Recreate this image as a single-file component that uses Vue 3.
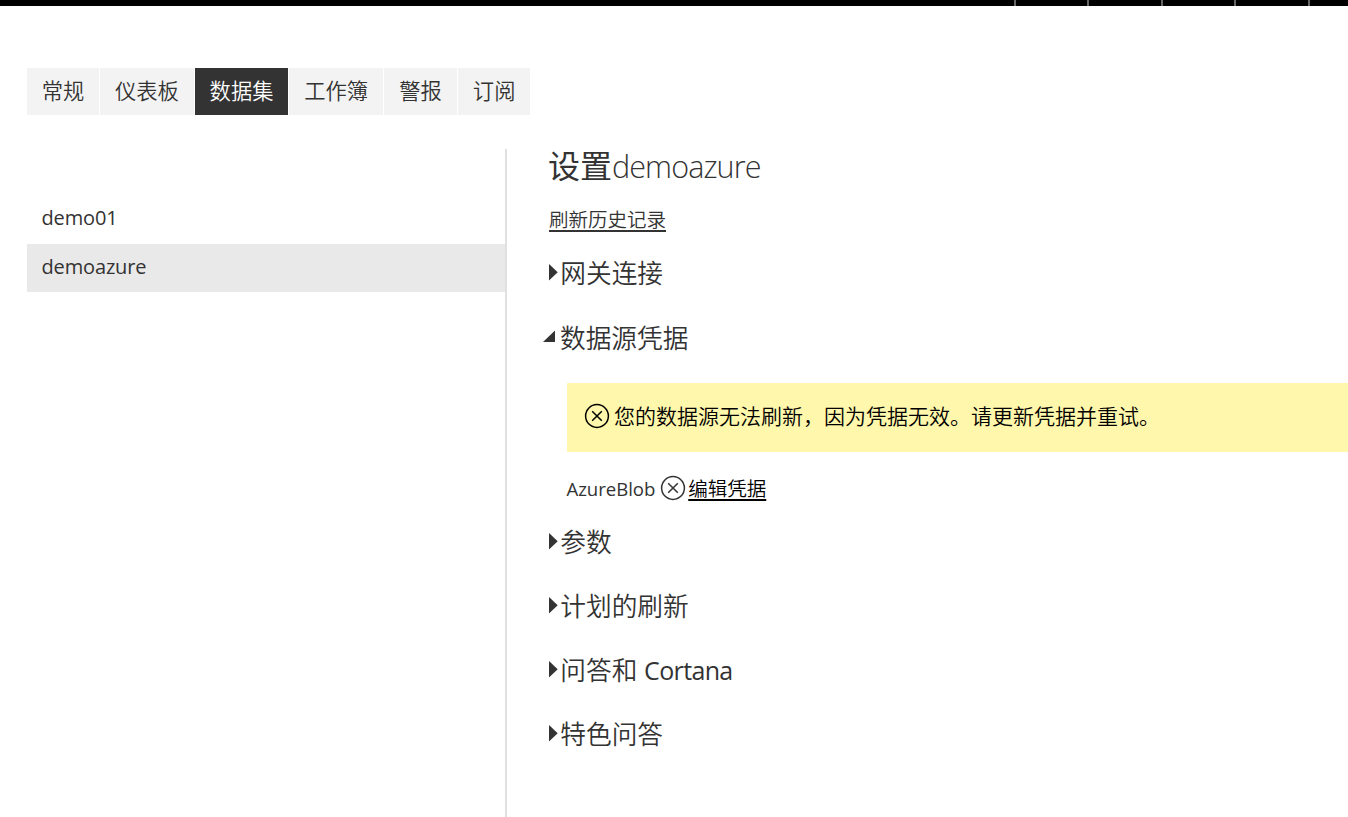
<script setup>
const tabs = [
  { label: '常规', size: 'w72' },
  { label: '仪表板', size: 'w93' },
  { label: '数据集', size: 'w93', active: true },
  { label: '工作簿', size: 'w93' },
  { label: '警报', size: 'w73' },
  { label: '订阅', size: 'w72' }
]
const lower = [
  { text: '参数' },
  { text: '计划的刷新' },
  { text: '问答和 ', latin: 'Cortana' },
  { text: '特色问答' }
]
</script>

<template>
  <div class="page">
    <header class="topbar"><i v-for="n in 5" :key="n"></i></header>
    <nav class="tabs">
      <button
        v-for="t in tabs"
        :key="t.label"
        :class="['tab', t.size, { active: t.active }]"
      >{{ t.label }}</button>
    </nav>
    <div class="body">
      <aside class="list">
        <div class="item">demo01</div>
        <div class="item selected">demoazure</div>
      </aside>
      <main class="main">
        <h1>设置<span>demoazure</span></h1>
        <a class="link history">刷新历史记录</a>
        <h2><svg class="tri" viewBox="0 0 12 18"><path d="M0 1L8.7 9.2L0 17.4Z" /></svg><span>网关连接</span></h2>
        <h2 class="expanded"><svg class="tri open" viewBox="0 0 18 18"><path d="M0 14H12V2.5Z" /></svg><span>数据源凭据</span></h2>
        <div class="alert">
          <svg class="cross" viewBox="0 0 26 26"><circle cx="13" cy="13" r="11.4" /><path d="M8.2 8.2L17.8 17.8M17.8 8.2L8.2 17.8" /></svg>
          <span>您的数据源无法刷新，因为凭据无效。请更新凭据并重试。</span>
        </div>
        <div class="cred">
          <span class="source">AzureBlob</span>
          <svg class="cross" viewBox="0 0 26 26"><circle cx="13" cy="13" r="11.4" /><path d="M8.2 8.2L17.8 17.8M17.8 8.2L8.2 17.8" /></svg>
          <a class="link edit">编辑凭据</a>
        </div>
        <h2 v-for="h in lower" :key="h.text"><svg class="tri" viewBox="0 0 12 18"><path d="M0 1L8.7 9.2L0 17.4Z" /></svg><span>{{ h.text }}</span><span v-if="h.latin" class="latin">{{ h.latin }}</span></h2>
      </main>
    </div>
  </div>
</template>

<style>
body { background: #fff; overflow: hidden; }
</style>

<style scoped>
.page {
  height: 817px;
  overflow: hidden;
  display: flex;
  flex-direction: column;
  color: #333;
  font-family: 'Noto Sans CJK SC', sans-serif;
  font-weight: 350;
}
.topbar {
  flex: none;
  height: 6px;
  background: #000;
  display: flex;
  justify-content: flex-end;
  gap: 71.5px;
  padding-right: 38.2px;
}
.topbar i { width: 2px; background: #666; }
.tabs { flex: none; display: flex; height: 47px; margin: 62px 0 0 27px; gap: 1.3px; }
.tab {
  border: 0;
  padding: 0 0 4px;
  background: #f3f3f3;
  color: #333;
  font: inherit;
  font-size: 21.3px;
  line-height: 43px;
  white-space: nowrap;
}
.w72 { width: 72px; }
.w73 { width: 72.8px; }
.w93 { width: 93.3px; }
.tab.active { background: #333; color: #fff; }
.body { display: flex; flex: 1; margin: 34px 0 0 27px; min-height: 0; }
.list { width: 478px; border-right: 2px solid #e0e0e0; padding-top: 46px; }
.item {
  height: 48px;
  margin-bottom: 1px;
  padding-left: 14.5px;
  line-height: 45px;
  font-family: 'Open Sans', sans-serif;
  font-weight: 400;
  font-size: 20px;
  letter-spacing: -0.15px;
}
.item.selected { background: #e9e9e9; }
.main { flex: 1; padding-left: 42px; min-width: 0; }
h1 { margin: 0; font-size: 32px; line-height: 30px; height: 48px; font-weight: 400; white-space: nowrap; text-indent: -1px; }
h1 span { font-family: 'Open Sans', sans-serif; font-weight: 300; font-size: 30.5px; letter-spacing: -0.9px; }
.link { text-decoration: underline; text-decoration-thickness: 2px; text-underline-offset: 2px; font-size: 19.5px; white-space: nowrap; }
.history { display: block; height: 44px; line-height: 43px; text-underline-offset: 3px; }
h2 {
  margin: 0;
  height: 64px;
  line-height: 62px;
  display: flex;
  align-items: center;
  font-size: 25.7px;
  font-weight: 350;
  white-space: pre;
}
h2 span { height: 64px; }
h2.expanded span { line-height: 64px; }
.tri { width: 12px; height: 18px; flex: none; fill: #333; margin: 0 -0.7px 2px 0; }
.tri.open { width: 18px; margin: 0 -1px 0 -6px; }
h2 .latin { font-family: 'Open Sans', sans-serif; font-weight: 400; font-size: 25px; letter-spacing: -0.65px; margin-left: 1px; line-height: 64px; }
.alert {
  margin: 14px 0 0 18px;
  height: 69px;
  background: #fff7ab;
  color: #000;
  display: flex;
  align-items: center;
  padding-left: 16.8px;
  font-size: 21px;
  white-space: nowrap;
}
.cross { width: 26px; height: 26px; flex: none; fill: none; stroke: currentColor; stroke-width: 1.5; }
.alert .cross { margin: 0 4.2px 3px 0; }
.alert span { line-height: 65px; height: 69px; }
.cred { height: 42px; padding: 16px 0 0 17.5px; display: flex; align-items: center; line-height: 42px; }
.cred .cross { margin: -2px 2px 0 5px; }
.source { font-family: 'Open Sans', sans-serif; font-weight: 400; font-size: 18.6px; letter-spacing: -0.05px; }
.edit { color: #000; line-height: 40px; height: 42px; text-underline-offset: 3px; }
</style>
